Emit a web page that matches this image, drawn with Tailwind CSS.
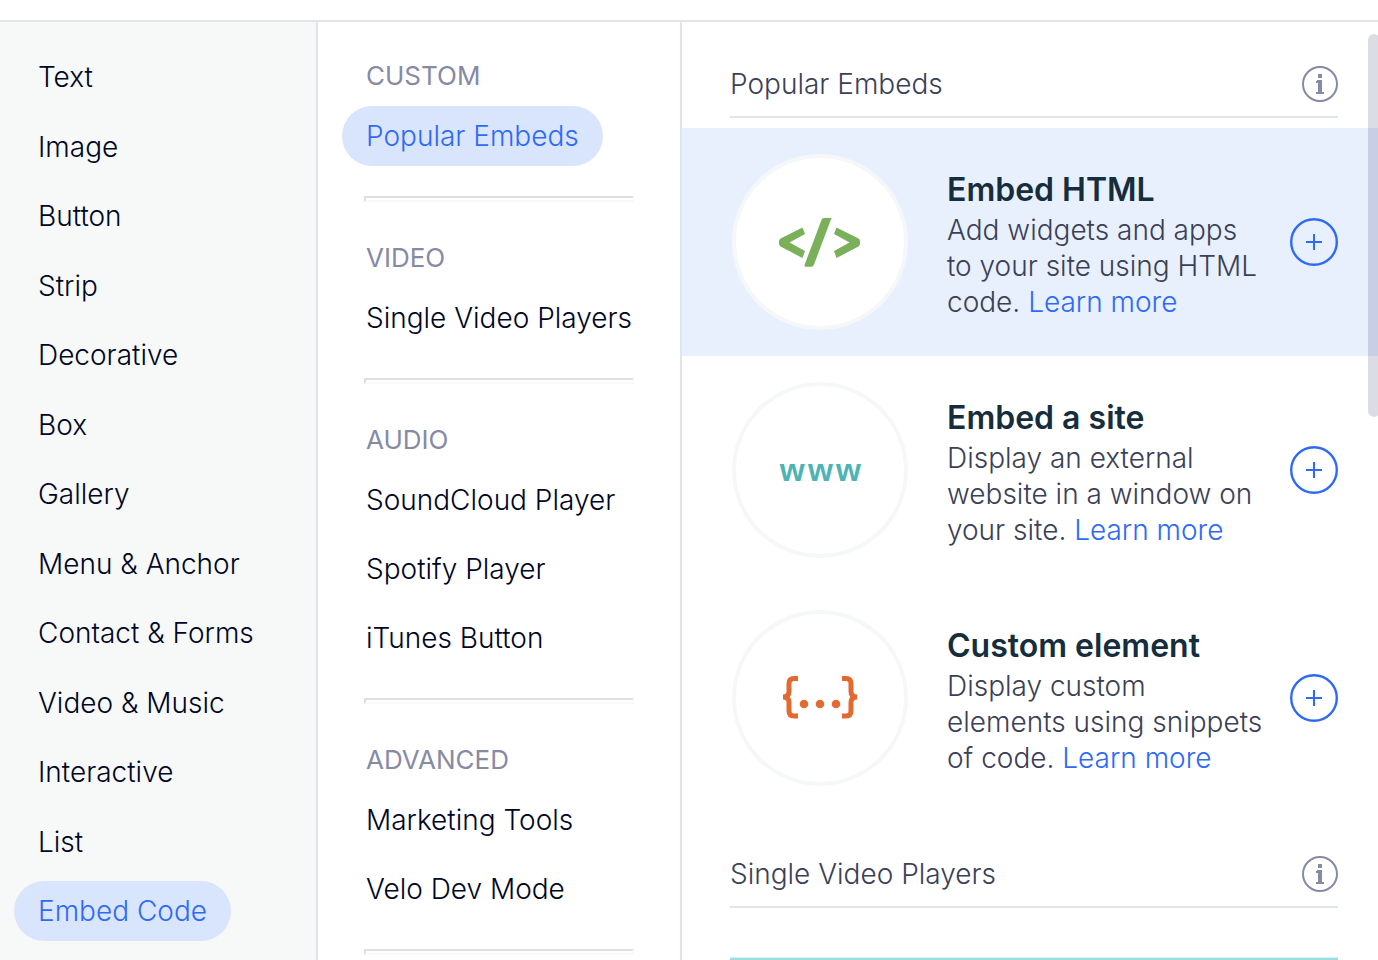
<!DOCTYPE html>
<html lang="en">
<head>
<meta charset="utf-8">
<meta name="viewport" content="width=device-width, initial-scale=1">
<title>Add Elements</title>
<script src="https://cdn.jsdelivr.net/npm/@tailwindcss/browser@4"></script>
</head>
<body class="h-screen overflow-hidden bg-white font-['Inter',sans-serif] text-[28px] leading-9 font-light text-[#000624]">
<svg class="hidden" aria-hidden="true">
  <symbol id="info" viewBox="0 0 36 36">
    <circle cx="18" cy="18" r="17" fill="none" stroke="#868aa5" stroke-width="2"/>
    <path fill="#868aa5" d="M16 8h4v4h-4zM15 14h5v12h2v2h-8v-2h2v-9h-2v-2h1z"/>
  </symbol>
  <symbol id="plus" viewBox="0 0 48 48">
    <circle cx="24" cy="24" r="22.8" fill="none" stroke="#2f6af6" stroke-width="2.4"/>
    <path fill="#2f6af6" d="M23 16h2v7h7v2h-7v7h-2v-7h-7v-2h7z"/>
  </symbol>
</svg>
<div class="flex h-full flex-col pt-5">
  <div class="flex min-h-0 flex-1 border-t-2 border-[#dfe5eb]">
    <nav aria-label="Categories" class="flex w-[318px] shrink-0 flex-col items-start justify-between border-r-2 border-[#dfe5eb] bg-[#f7f9f8] pt-[25px] pb-[19px] pl-[14px]">
      <button class="h-[60px] rounded-full px-6">Text</button>
      <button class="h-[60px] rounded-full px-6">Image</button>
      <button class="h-[60px] rounded-full px-6">Button</button>
      <button class="h-[60px] rounded-full px-6">Strip</button>
      <button class="h-[60px] rounded-full px-6">Decorative</button>
      <button class="h-[60px] rounded-full px-6">Box</button>
      <button class="h-[60px] rounded-full px-6">Gallery</button>
      <button class="h-[60px] rounded-full px-6">Menu &amp; Anchor</button>
      <button class="h-[60px] rounded-full px-6">Contact &amp; Forms</button>
      <button class="h-[60px] rounded-full px-6">Video &amp; Music</button>
      <button class="h-[60px] rounded-full px-6">Interactive</button>
      <button class="h-[60px] rounded-full px-6">List</button>
      <button class="h-[60px] rounded-full bg-[#d9e5fd] px-6 text-[#2f6af6]">Embed Code</button>
    </nav>

    <nav aria-label="Sections" class="w-[364px] shrink-0 overflow-hidden border-r-2 border-[#dfe5eb] pt-[39px] pr-[46px] pl-6 whitespace-nowrap">
      <h2 class="mb-[15px] pl-6 text-[26px] leading-[30px] font-normal text-[#868aa5]">CUSTOM</h2>
      <div class="flex flex-col items-start gap-[9px]">
        <button class="h-[60px] rounded-full bg-[#d9e5fd] px-6 text-[#2f6af6]">Popular Embeds</button>
      </div>
      <hr class="mt-[30px] mb-[41px] ml-[22px] h-[6px] border-2 border-t-[#dfdfdf] border-r-[#f9f9f9] border-b-[#f9f9f9] border-l-[#dfdfdf]">
      <h2 class="mb-[15px] pl-6 text-[26px] leading-[30px] font-normal text-[#868aa5]">VIDEO</h2>
      <div class="flex flex-col items-start gap-[9px]">
        <button class="h-[60px] rounded-full px-6">Single Video Players</button>
      </div>
      <hr class="mt-[30px] mb-[41px] ml-[22px] h-[6px] border-2 border-t-[#dfdfdf] border-r-[#f9f9f9] border-b-[#f9f9f9] border-l-[#dfdfdf]">
      <h2 class="mb-[15px] pl-6 text-[26px] leading-[30px] font-normal text-[#868aa5]">AUDIO</h2>
      <div class="flex flex-col items-start gap-[9px]">
        <button class="h-[60px] rounded-full px-6">SoundCloud Player</button>
        <button class="h-[60px] rounded-full px-6">Spotify Player</button>
        <button class="h-[60px] rounded-full px-6">iTunes Button</button>
      </div>
      <hr class="mt-[30px] mb-[41px] ml-[22px] h-[6px] border-2 border-t-[#dfdfdf] border-r-[#f9f9f9] border-b-[#f9f9f9] border-l-[#dfdfdf]">
      <h2 class="mb-[15px] pl-6 text-[26px] leading-[30px] font-normal text-[#868aa5]">ADVANCED</h2>
      <div class="flex flex-col items-start gap-[9px]">
        <button class="h-[60px] rounded-full px-6">Marketing Tools</button>
        <button class="h-[60px] rounded-full px-6">Velo Dev Mode</button>
      </div>
      <hr class="mt-[30px] mb-[41px] ml-[22px] h-[6px] border-2 border-t-[#dfdfdf] border-r-[#f9f9f9] border-b-[#f9f9f9] border-l-[#dfdfdf]">
    </nav>

    <main class="relative min-w-0 flex-1 overflow-hidden text-[#3b4057]">
      <div class="mx-12 mr-10 mb-[10px] flex items-center justify-between border-b-2 border-[#dfe5eb] pt-11 pb-[14px]">
        <h2>Popular Embeds</h2>
        <button aria-label="About Popular Embeds"><svg class="size-9"><use href="#info"/></svg></button>
      </div>

      <article class="flex h-[228px] items-center bg-[#e8f0fe] pr-10 pl-[50px]">
        <div class="mr-[39px] flex size-44 shrink-0 items-center justify-center rounded-full border-4 border-[#f5f7f8] bg-white">
          <svg class="h-[50px] w-[84px]" viewBox="0 0 84 50" aria-hidden="true" fill="#7bb05b">
            <path d="M24.500 10.500L27 17L11.500 25.500L27 34L24.500 41L2.500 29.500Q1 28.500 1 26.500V24.500Q1 22.500 2.500 21.500Z"/>
            <path d="M46 1H53.500L36 47.500Q35.300 49.800 33 49.800H28Q26 49.800 26.600 47.800L43.500 3Q44.300 1 46 1Z"/>
            <path d="M58.500 10.500L56 17L71.500 25.500L56 34L58.500 41L80.500 29.500Q82 28.500 82 26.500V24.500Q82 22.500 80.500 21.500Z"/>
          </svg>
        </div>
        <div class="min-w-0 flex-1 pt-1 whitespace-nowrap">
          <h3 class="text-[32px] leading-[44px] font-semibold text-[#162d3d]">Embed HTML</h3>
          <p>Add widgets and apps<br>to your site using HTML<br>code. <a href="#" class="text-[#2f6af6]">Learn more</a></p>
        </div>
        <button aria-label="Add Embed HTML"><svg class="size-12"><use href="#plus"/></svg></button>
      </article>

      <article class="flex h-[228px] items-center pr-10 pl-[50px]">
        <div class="mr-[39px] flex size-44 shrink-0 items-center justify-center rounded-full border-4 border-[#f5f7f8] bg-white pl-1 font-['Liberation_Sans',sans-serif] text-[32px] leading-9 font-bold tracking-widest text-[#4eb3b5]">www</div>
        <div class="min-w-0 flex-1 pt-1 whitespace-nowrap">
          <h3 class="text-[32px] leading-[44px] font-semibold text-[#162d3d]">Embed a site</h3>
          <p>Display an external<br>website in a window on<br>your site. <a href="#" class="text-[#2f6af6]">Learn more</a></p>
        </div>
        <button aria-label="Add Embed a site"><svg class="size-12"><use href="#plus"/></svg></button>
      </article>

      <article class="flex h-[228px] items-center pr-10 pl-[50px]">
        <div class="mr-[39px] flex size-44 shrink-0 items-center justify-center rounded-full border-4 border-[#f5f7f8] bg-white">
          <svg class="h-[44px] w-[78px]" viewBox="0 0 78 44" aria-hidden="true">
            <g fill="none" stroke="#e2692f" stroke-width="5">
              <path d="M17 2.500H13Q8 2.500 8 7.500V15.500Q8 21 2 21Q8 21 8 26.500V35Q8 40 13 40H17"/>
              <path d="M61 2.500H65Q70 2.500 70 7.500V15.500Q70 21 76 21Q70 21 70 26.500V35Q70 40 65 40H61"/>
            </g>
            <g fill="#e2692f"><circle cx="23" cy="28" r="4.300"/><circle cx="39" cy="28" r="4.300"/><circle cx="55" cy="28" r="4.300"/></g>
          </svg>
        </div>
        <div class="min-w-0 flex-1 pt-1 whitespace-nowrap">
          <h3 class="text-[32px] leading-[44px] font-semibold text-[#162d3d]">Custom element</h3>
          <p>Display custom<br>elements using snippets<br>of code. <a href="#" class="text-[#2f6af6]">Learn more</a></p>
        </div>
        <button aria-label="Add Custom element"><svg class="size-12"><use href="#plus"/></svg></button>
      </article>

      <div class="mx-12 mr-10 mb-[49px] flex items-center justify-between border-b-2 border-[#dfe5eb] pt-11 pb-[14px]">
        <h2>Single Video Players</h2>
        <button aria-label="About Single Video Players"><svg class="size-9"><use href="#info"/></svg></button>
      </div>
      <div class="mr-10 ml-12 h-40 border-t border-[#d5f1f2] bg-[#9bdfe2]"></div>

      <div class="absolute top-3 -right-[2px] h-[383px] w-3 rounded-full bg-[#161650]/15"></div>
    </main>
  </div>
</div>
</body>
</html>
